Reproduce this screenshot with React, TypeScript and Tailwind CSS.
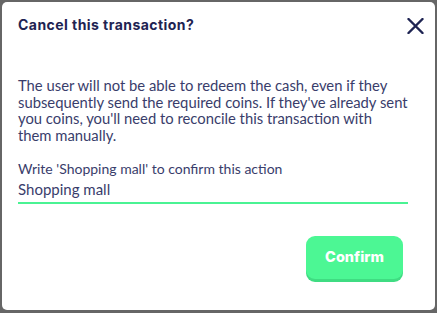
import { useState } from "react"

export default function App() {
  const [value, setValue] = useState("Shopping mall")

  return (
    <div className="w-[437px] h-[313px] bg-[#666666] pt-[2px] pl-[2px] pr-[2px] pb-[3px]">
      <div className="h-full w-full bg-white rounded-[5px] flex flex-col pl-4 pr-[27px] pt-[12px]">
        <div className="flex items-start justify-between">
          <h2 className="text-[14px] leading-[22px] font-bold text-[#1e2352] tracking-[0.45px] font-['Inter',sans-serif]">
            Cancel this transaction?
          </h2>
          <button className="-mr-[17px] mt-[2px] w-5 h-5 flex items-center justify-center text-[#1e2352]">
            <svg width="17" height="16" viewBox="0 0 17 16" fill="none">
              <path d="M1.5 1L15.5 15M15.5 1L1.5 15" stroke="currentColor" strokeWidth="2.4" strokeLinecap="round" />
            </svg>
          </button>
        </div>

        <p className="mt-[41px] text-[14.8px] leading-[16.7px] text-[#393d6b] font-['Lato',sans-serif]">
          The user will not be able to redeem the cash, even if they subsequently send the required coins. If they've
          already sent you coins, you'll need to reconcile this transaction with them manually.
        </p>

        <label className="mt-[17px] block text-[14px] leading-[16px] text-[#393d6b] font-['Lato',sans-serif]">
          Write 'Shopping mall' to confirm this action
        </label>
        <input
          value={value}
          onChange={e => setValue(e.target.value)}
          className="mt-[3px] w-full border-b-2 border-[#4af393] pb-[4px] text-[15px] leading-[18px] text-[#393d6b] outline-none font-['Lato',sans-serif]"
        />

        <div className="mt-[32px] flex justify-end mr-[5px]">
          <button className="w-[97px] h-[43px] rounded-[9px] bg-[#4cf794] shadow-[0_3px_0_#3fdc82] text-white text-[14.5px] font-extrabold font-['Inter',sans-serif]">
            Confirm
          </button>
        </div>
      </div>
    </div>
  )
}
